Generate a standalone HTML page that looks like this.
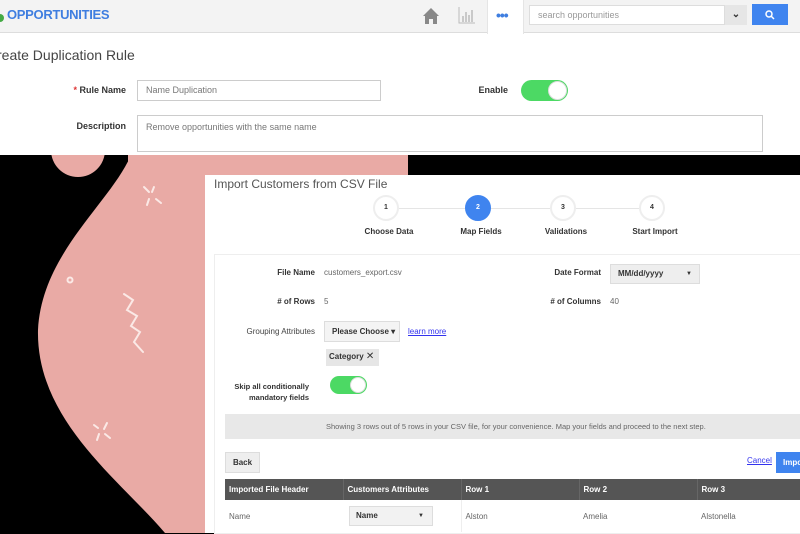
<!DOCTYPE html>
<html><head><meta charset="utf-8"><style>
*{margin:0;padding:0;box-sizing:border-box}
body{width:800px;height:533px;overflow:hidden;background:#000;font-family:"Liberation Sans",sans-serif;position:relative}
.a{position:absolute}
.top{left:0;top:0;width:800px;height:155px;background:#fff}
.hdr{left:0;top:0;width:800px;height:33px;background:#f3f3f3;border-bottom:1px solid #ddd}
.lbl{font-size:9px;font-weight:bold;color:#333;text-align:right}
.txt{font-size:8px;color:#666}
.inp{border:1px solid #ccc;background:#fff;font-size:9px;color:#777;padding:0 8px}
.tog{background:#4cd964;border-radius:12px}
.tog i{position:absolute;right:1px;top:1px;background:#fff;border-radius:50%;border:1px solid #ddd}
.card{left:205px;top:175px;width:595px;height:358px;background:#fff}
.step{width:26px;height:26px;border-radius:50%;border:2px solid #eee;background:#fff;font-size:7px;font-weight:bold;text-align:center;line-height:22px;color:#333}
.sl{font-size:8px;font-weight:bold;color:#333;text-align:center;width:90px}
.btn{background:#eee;border:1px solid #ddd;font-size:8px;font-weight:bold;color:#333}
th{background:#555;color:#fff;font-size:8px;text-align:left;padding-left:4px;height:21px}
td{font-size:8px;color:#666;padding-left:4px;height:32px}
</style></head><body>
<svg class="a" style="left:0;top:0" width="800" height="533">
<path d="M133 150 C115 200 42 250 38 330 C36 420 120 480 165 533 L300 533 L300 150 Z" fill="#e9aaa5"/>
<rect x="128" y="150" width="280" height="30" fill="#e9aaa5"/>
<circle cx="78" cy="150" r="27" fill="#e9aaa5"/>
<g stroke="#fbe9e6" stroke-width="2" fill="none" stroke-linecap="round">
<path d="M144 187 L149 192 M156 199 L161 203 M154 187 L152 192 M149 199 L147 205"/>
<path d="M94 425 L98 428 M105 434 L110 438 M107 423 L104 429 M99 434 L97 440"/>
<circle cx="70" cy="280" r="2.5"/>
<path d="M124 294 L133 300 L127 310 L137 316 L131 326 L140 332 L134 342 L143 352"/>
</g>
</svg>
<div class="a top"></div>
<div class="a hdr"></div>
<div class="a" style="left:0;top:14px;width:4px;height:8px;background:#4a4;border-radius:0 4px 4px 0"></div>
<div class="a" style="left:7px;top:7px;font-size:13px;font-weight:bold;color:#3f7ee0;letter-spacing:-0.3px">OPPORTUNITIES</div>
<svg class="a" style="left:422px;top:7px" width="18" height="18"><path d="M9 1 L17 9 L15 9 L15 17 L11 17 L11 12 L7 12 L7 17 L3 17 L3 9 L1 9 Z" fill="#888"/></svg>
<svg class="a" style="left:458px;top:6px" width="18" height="18"><path d="M1 1 V17 H17" stroke="#bbb" fill="none"/><path d="M5 10 V16 M8 6 V16 M11 9 V16 M14 4 V16" stroke="#bbb" stroke-width="1.5"/></svg>
<div class="a" style="left:487px;top:0;width:37px;height:34px;background:#fff;border-left:1px solid #e5e5e5;border-right:1px solid #e5e5e5"></div>
<div class="a" style="left:496px;top:7px;font-size:14px;color:#3f7ee0;letter-spacing:-1px;font-weight:bold">•••</div>
<div class="a inp" style="left:529px;top:5px;width:196px;height:20px;line-height:18px;font-size:9px;color:#999;border-color:#ddd">search opportunities</div>
<div class="a" style="left:725px;top:5px;width:22px;height:20px;background:#e6e6e6;text-align:center;font-size:10px;line-height:20px;font-weight:bold;color:#333">⌄</div>
<div class="a" style="left:752px;top:4px;width:36px;height:21px;background:#3f84ef"></div>
<svg class="a" style="left:764px;top:9px" width="12" height="12"><circle cx="5" cy="5" r="3" stroke="#fff" stroke-width="1.5" fill="none"/><path d="M7 7 L10 10" stroke="#fff" stroke-width="1.5"/></svg>
<div class="a" style="left:-3px;top:47px;font-size:14px;color:#444">reate Duplication Rule</div>
<div class="a lbl" style="left:60px;top:85px;width:66px"><span style="color:#d33">* </span>Rule Name</div>
<div class="a inp" style="left:137px;top:80px;width:244px;height:21px;line-height:19px">Name Duplication</div>
<div class="a lbl" style="left:450px;top:85px;width:58px">Enable</div>
<div class="a tog" style="left:521px;top:80px;width:47px;height:21px"><i style="width:19px;height:19px"></i></div>
<div class="a lbl" style="left:50px;top:121px;width:76px">Description</div>
<div class="a inp" style="left:137px;top:115px;width:626px;height:37px;padding-top:6px">Remove opportunities with the same name</div>

<div class="a card"></div>
<div class="a" style="left:214px;top:177px;font-size:12px;color:#555">Import Customers from CSV File</div>
<div class="a" style="left:390px;top:208px;width:262px;height:1px;background:#e5e5e5"></div>
<div class="a step" style="left:373px;top:195px">1</div>
<div class="a step" style="left:465px;top:195px;background:#3f84ef;border-color:#3f84ef;color:#fff">2</div>
<div class="a step" style="left:550px;top:195px">3</div>
<div class="a step" style="left:639px;top:195px">4</div>
<div class="a sl" style="left:344px;top:227px">Choose Data</div>
<div class="a sl" style="left:436px;top:227px">Map Fields</div>
<div class="a sl" style="left:521px;top:227px">Validations</div>
<div class="a sl" style="left:610px;top:227px">Start Import</div>
<div class="a" style="left:214px;top:254px;width:590px;height:280px;border:1px solid #eee"></div>
<div class="a lbl" style="left:240px;top:268px;width:75px;font-size:8px">File Name</div>
<div class="a txt" style="left:324px;top:268px">customers_export.csv</div>
<div class="a lbl" style="left:520px;top:268px;width:81px;font-size:8px">Date Format</div>
<div class="a btn" style="left:610px;top:264px;width:90px;height:20px;line-height:18px;padding-left:7px">MM/dd/yyyy <span style="float:right;margin-right:7px;font-size:6px">▼</span></div>
<div class="a lbl" style="left:240px;top:297px;width:75px;font-size:8px"># of Rows</div>
<div class="a txt" style="left:324px;top:297px">5</div>
<div class="a lbl" style="left:520px;top:297px;width:81px;font-size:8px"># of Columns</div>
<div class="a txt" style="left:610px;top:297px">40</div>
<div class="a lbl" style="left:230px;top:327px;width:85px;font-size:8px;font-weight:normal;color:#444">Grouping Attributes</div>
<div class="a btn" style="left:324px;top:321px;width:76px;height:21px;line-height:19px;padding-left:7px;background:#f4f4f4">Please Choose ▾</div>
<div class="a" style="left:408px;top:327px;font-size:8px;color:#33e;text-decoration:underline">learn more</div>
<div class="a btn" style="left:326px;top:349px;width:53px;height:17px;line-height:15px;padding-left:3px;border:none;background:#e6e6e6">Category <span style="font-weight:normal;font-size:10px">✕</span></div>
<div class="a lbl" style="left:222px;top:381px;width:87px;font-size:7.5px;line-height:11px">Skip all conditionally mandatory fields</div>
<div class="a tog" style="left:330px;top:376px;width:37px;height:18px"><i style="width:16px;height:16px"></i></div>
<div class="a" style="left:225px;top:414px;width:580px;height:25px;background:#e8e8e8;font-size:7.5px;color:#666;line-height:25px;padding-left:101px">Showing 3 rows out of 5 rows in your CSV file, for your convenience. Map your fields and proceed to the next step.</div>
<div class="a btn" style="left:225px;top:452px;width:35px;height:21px;line-height:19px;text-align:center">Back</div>
<div class="a" style="left:747px;top:456px;font-size:8px;color:#33e;text-decoration:underline">Cancel</div>
<div class="a" style="left:776px;top:452px;width:30px;height:21px;background:#3f84ef;color:#fff;font-size:8px;font-weight:bold;line-height:21px;padding-left:7px">Import</div>
<table class="a" style="left:225px;top:479px;width:580px;border-collapse:collapse">
<tr><th style="width:118px">Imported File Header</th><th style="width:118px;border-left:1px solid #666">Customers Attributes</th><th style="width:118px;border-left:1px solid #666">Row 1</th><th style="width:118px;border-left:1px solid #666">Row 2</th><th style="border-left:1px solid #666">Row 3</th></tr>
<tr><td>Name</td><td><div class="btn" style="width:84px;height:20px;line-height:18px;padding-left:6px;margin-left:2px;background:#f2f2f2">Name <span style="float:right;margin-right:8px;font-size:6px">▼</span></div></td><td style="border-left:1px solid #eee">Alston</td><td>Amelia</td><td>Alstonella</td></tr>
</table>
</body></html>
